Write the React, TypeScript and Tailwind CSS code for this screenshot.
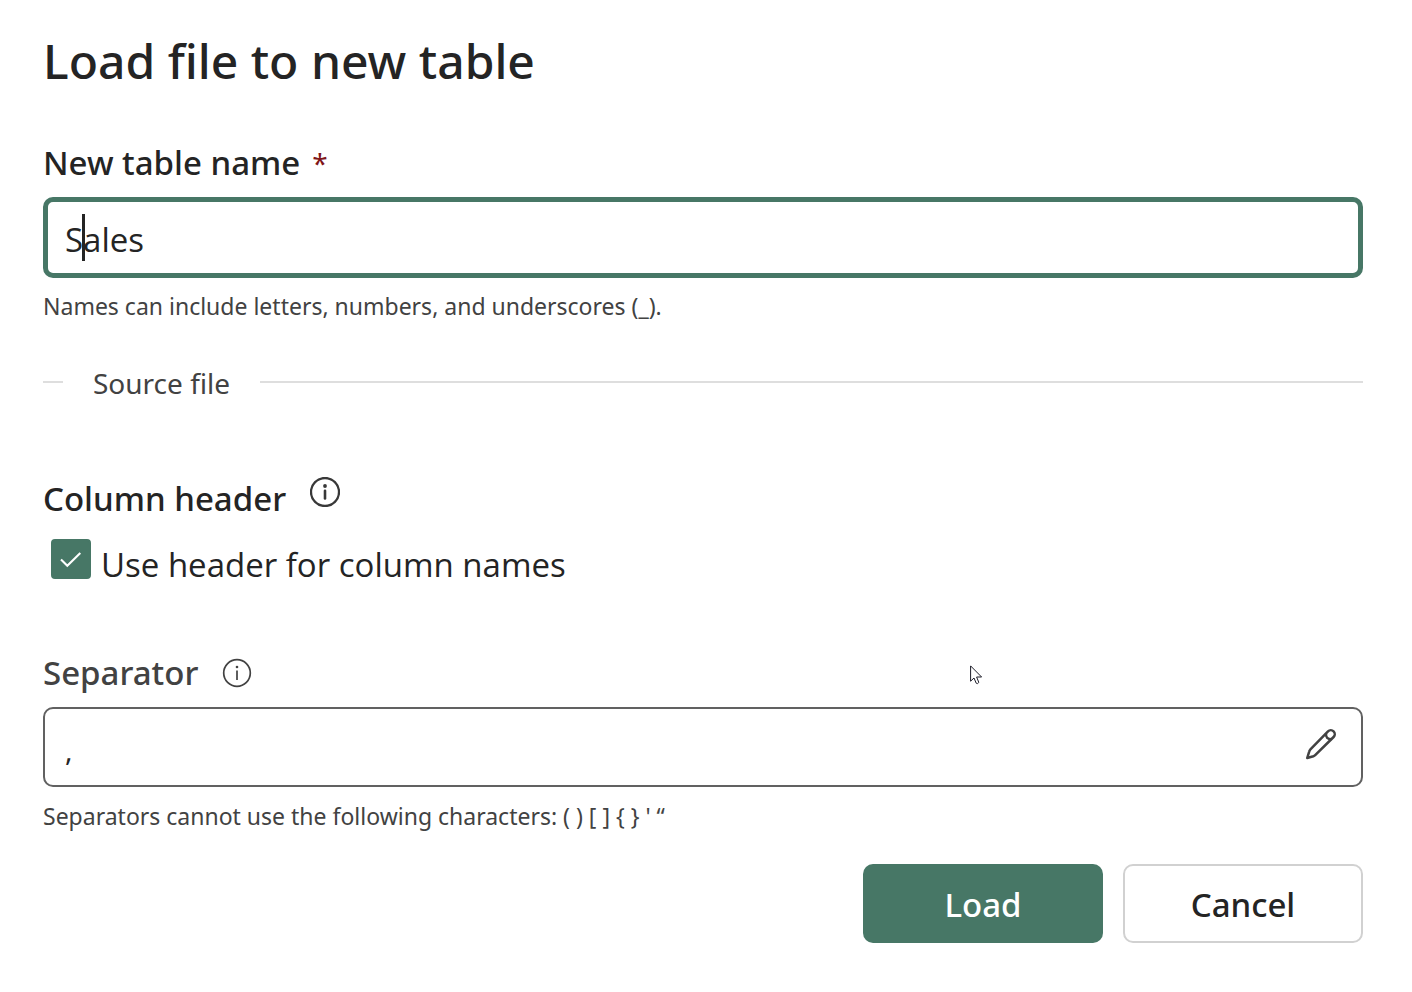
import { useState } from "react";
import type { FormEvent } from "react";

function InfoIcon({ className, bold }: { className: string; bold?: boolean }) {
  return (
    <svg viewBox="0 0 30 30" className={className} fill="none" aria-hidden="true">
      <circle cx="15" cy="15" r={bold ? 14 : 13.3} stroke="currentColor" strokeWidth={bold ? 2.3 : 1.7} />
      <circle cx="15" cy="9" r={bold ? 1.9 : 1.3} fill="currentColor" />
      <path d={bold ? "M15 13.8V21.4" : "M15 12.4V22"} stroke="currentColor" strokeWidth={bold ? 2.6 : 1.7} strokeLinecap={bold ? "round" : "butt"} />
    </svg>
  );
}

function PencilIcon() {
  return (
    <svg viewBox="0 0 32 32" className="size-8" fill="none" stroke="currentColor" strokeWidth="2.5" strokeLinejoin="round" aria-hidden="true">
      <path d="M23 3.4a3.9 3.9 0 0 1 5.6 5.6L10.2 27.2Q9.4 28 8.4 28.3L2.2 30 4.2 23.6Q4.5 22.5 5.2 21.7Z" />
      <path d="M21 5.6Q20.6 11.2 26.4 11.2" />
    </svg>
  );
}

function Pointer() {
  return (
    <svg viewBox="0 0 13 20" className="absolute left-[970px] top-[665px] h-5 w-[13px]" aria-hidden="true">
      <path d="M.6 .9V16.2L4 13L6.2 18.2Q7.6 19.4 8.8 17.4L6.6 12H11.6Z" fill="white" stroke="#1c1c28" strokeWidth="1" />
    </svg>
  );
}

export default function App() {
  const [name, setName] = useState("Sales");
  const [useHeader, setUseHeader] = useState(true);
  const [separator, setSeparator] = useState(",");
  const submit = (event: FormEvent) => event.preventDefault();

  return (
    <main className="relative bg-white pt-[29px] pr-[49px] pb-12 pl-[43px] font-['Noto_Sans','Open_Sans',sans-serif] text-[#242424]">
      <form onSubmit={submit}>
        <h1 className="text-[48px] leading-16 font-medium">Load file to new table</h1>

        <div className="mt-[46px] flex gap-3 leading-12">
          <label htmlFor="table-name" className="text-[33px] font-medium">New table name</label>
          <span className="text-[28px] text-[#7f1518]" aria-hidden="true">*</span>
        </div>
        <div className="relative mt-2.5">
          <input
            id="table-name"
            required
            value={name}
            onChange={(event) => setName(event.target.value)}
            className="block h-[81px] w-full rounded-[10px] border-5 border-[#477766] px-[17px] pt-1 font-['Open_Sans','Noto_Sans',sans-serif] text-[33px] caret-transparent outline-none"
          />
          <span className="absolute top-[17px] left-[39px] h-[47px] w-[3px] bg-[#242424]" />
        </div>
        <p className="mt-3 text-[23px] leading-8 text-[#424242]">Names can include letters, numbers, and underscores (_).</p>

        <div className="mt-10 flex items-center gap-[30px] text-[28px] text-[#424242]">
          <span className="h-0.5 w-5 bg-[#dedede]" />
          <h2 className="pt-0.5 leading-[38px]">Source file</h2>
          <span className="h-0.5 flex-1 bg-[#dedede]" />
        </div>

        <div className="mt-[73px] flex items-start gap-6">
          <h3 className="text-[33px] leading-12 font-medium">Column header</h3>
          <button type="button" aria-label="About column header" className="mt-0.5 text-[#383838]">
            <InfoIcon className="size-[30px]" bold />
          </button>
        </div>
        <div className="mt-4 ml-2 flex items-start gap-2.5">
          <span className="relative size-10 shrink-0">
            <input
              id="use-header"
              type="checkbox"
              checked={useHeader}
              onChange={(event) => setUseHeader(event.target.checked)}
              className="peer block size-10 appearance-none rounded-[4px] border-2 border-[#477766] checked:bg-[#477766]"
            />
            <svg viewBox="0 0 40 40" className="pointer-events-none absolute inset-0 hidden size-10 peer-checked:block" fill="none" aria-hidden="true">
              <path d="M10 20.5 16.3 26.8 29.3 14" stroke="white" strokeWidth="2.1" />
            </svg>
          </span>
          <label htmlFor="use-header" className="pt-0.5 font-['Open_Sans','Noto_Sans',sans-serif] text-[33px] leading-12">Use header for column names</label>
        </div>

        <div className="mt-[60px] flex items-center gap-6 text-[#424242]">
          <label htmlFor="separator" className="text-[33px] leading-12 font-medium">Separator</label>
          <button type="button" aria-label="About separator">
            <InfoIcon className="size-[30px]" />
          </button>
        </div>
        <div className="mt-2.5 flex h-20 items-center rounded-[10px] border-2 border-[#616161] pr-6 pb-1.5 pl-5">
          <input
            id="separator"
            value={separator}
            onChange={(event) => setSeparator(event.target.value)}
            className="h-full min-w-0 flex-1 pt-3 text-[28px] text-[#242424] outline-none"
          />
          <button type="button" aria-label="Edit separator" className="text-[#424242]">
            <PencilIcon />
          </button>
        </div>
        <p className="mt-[13px] text-[23px] leading-8 text-[#424242]">
          Separators cannot use the following characters: ( ) [ ] {"{ }"} ' “
        </p>

        <div className="mt-8 flex justify-end gap-5 text-[33px] font-medium">
          <button type="submit" className="h-[79px] w-60 rounded-[10px] bg-[#477766] pt-0.5 text-white">Load</button>
          <button type="button" className="h-[79px] w-60 rounded-[10px] border-2 border-[#d1d1d1] pt-0.5">Cancel</button>
        </div>
      </form>
      <Pointer />
    </main>
  );
}
